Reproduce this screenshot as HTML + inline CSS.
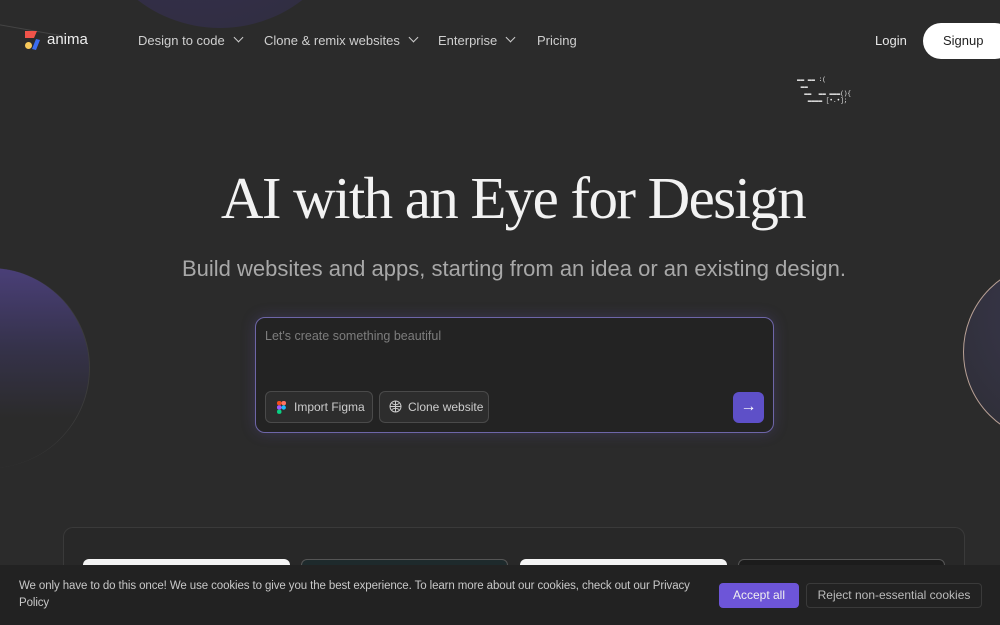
<!DOCTYPE html>
<html><head><meta charset="utf-8"><style>
*{margin:0;padding:0;box-sizing:border-box}
html,body{width:1000px;height:625px;overflow:hidden}
body{background:#2b2b2b;font-family:"Liberation Sans",sans-serif;color:#ddd;position:relative}
.circ{position:absolute;border-radius:50%}
.nav{position:absolute;top:0;left:0;right:0;height:82px}
.nav a{position:absolute;top:33px;font-size:13px;color:#cfcfcf;text-decoration:none}
.chev{display:inline-block;width:7px;height:7px;border-right:1.4px solid #ccc;border-bottom:1.4px solid #ccc;transform:rotate(45deg);margin-left:10px;position:relative;top:-4px}
h1{position:absolute;top:164px;left:26px;right:0;text-align:center;font-family:"Liberation Serif",serif;font-weight:400;font-size:59px;color:#f2f2f2;letter-spacing:-1.6px}
.sub{position:absolute;top:256px;left:28px;right:0;text-align:center;font-size:22px;color:#a8a8a8}
.box{position:absolute;left:255px;top:317px;width:519px;height:116px;border:1px solid #6e66a8;border-radius:10px;background:#232323;box-shadow:0 0 14px rgba(110,90,200,.25)}
.btn{position:absolute;top:73px;height:32px;border:1px solid #4a4a4a;border-radius:6px;background:#2d2d2d;font-size:12px;color:#ccc;line-height:30px}
.cookie{position:absolute;left:0;right:0;top:565px;height:60px;background:#222}
</style></head><body>
<div class="circ" style="left:90px;top:-220px;width:260px;height:248px;background:radial-gradient(circle at 40% 30%,#3a3358,#2e2c3c);"></div>
<div style="position:absolute;left:0;top:0;width:80px;height:25px;border-bottom:1px solid #555;transform:rotate(10deg);transform-origin:0 0;opacity:.6"></div>
<div class="circ" style="left:-110px;top:268px;width:200px;height:200px;background:linear-gradient(180deg,#4a3f78 0%,#35324a 40%,#2b2b2b 75%);border-right:1px solid #3c3c3c"></div>
<div class="circ" style="left:963px;top:262px;width:180px;height:180px;border:1px solid #b8a095;background:radial-gradient(circle at 60% 30%,#3a3850,#2d2d33)"></div>
<div class="nav">
 <svg style="position:absolute;left:25px;top:31px" width="18" height="20" viewBox="0 0 18 20"><path d="M0 0H12L9 7H0Z" fill="#f0534a"/><circle cx="3.5" cy="14.5" r="3.5" fill="#f7c85a"/><path d="M11 8L15 9L11 19L7 18Z" fill="#3b6cf0"/></svg>
 <span style="position:absolute;left:47px;top:31px;font-size:15px;color:#eee">anima</span>
 <a style="left:138px">Design to code<span class="chev"></span></a>
 <a style="left:264px">Clone &amp; remix websites<span class="chev"></span></a>
 <a style="left:438px">Enterprise<span class="chev"></span></a>
 <a style="left:537px">Pricing</a>
 <a style="left:875px;color:#e8e8e8">Login</a>
 <div style="position:absolute;left:923px;top:23px;width:90px;height:36px;border-radius:18px;background:#fff;color:#222;font-size:13px;line-height:36px;padding-left:20px">Signup</div>
</div>
<div style="position:absolute;left:797px;top:76px;font:6px 'Liberation Mono',monospace;color:#eee;line-height:7px;white-space:pre">▬▬ ▬▬ :(
 ▬▬
  ▬▬  ▬▬ ▬▬▬(){
   ▬▬▬▬ [•.•];</div>
<h1>AI with an Eye for Design</h1>
<div class="sub">Build websites and apps, starting from an idea or an existing design.</div>
<div class="box">
 <div style="position:absolute;left:9px;top:11px;font-size:12.5px;color:#7d7d7d">Let's create something beautiful</div>
 <div class="btn" style="left:9px;width:108px;padding-left:28px">Import Figma
  <svg style="position:absolute;left:11px;top:9px" width="9" height="13" viewBox="0 0 9 13"><rect width="4.5" height="4.3" fill="#f24e1e" rx="2"/><rect x="4.5" width="4.5" height="4.3" fill="#ff7262" rx="2"/><rect y="4.3" width="4.5" height="4.3" fill="#a259ff" rx="2"/><circle cx="6.7" cy="6.5" r="2.2" fill="#1abcfe"/><rect y="8.6" width="4.5" height="4.3" fill="#0acf83" rx="2"/></svg></div>
 <div class="btn" style="left:123px;width:110px;padding-left:28px">Clone website
  <svg style="position:absolute;left:9px;top:8px" width="13" height="13" viewBox="0 0 13 13" fill="none" stroke="#ccc" stroke-width="1"><circle cx="6.5" cy="6.5" r="5.5"/><path d="M1 6.5H12M6.5 1V12M3 3.5Q6.5 6 10 3.5M3 9.5Q6.5 7 10 9.5"/></svg></div>
 <div style="position:absolute;left:477px;top:74px;width:31px;height:31px;border-radius:6px;background:#5e50c8;color:#fff;font-size:16px;text-align:center;line-height:30px">→</div>
</div>
<div style="position:absolute;left:63px;top:527px;width:902px;height:98px;border:1px solid #3a3a3a;border-bottom:none;border-radius:10px 10px 0 0;background:#282828"></div>
<div style="position:absolute;left:83px;top:559px;width:207px;height:20px;background:#f4f4f4;border-radius:6px"></div>
<div style="position:absolute;left:301px;top:559px;width:207px;height:20px;background:#1e2a2c;border:1px solid #555;border-radius:6px"></div>
<div style="position:absolute;left:520px;top:559px;width:207px;height:20px;background:#f4f4f4;border-radius:6px"></div>
<div style="position:absolute;left:738px;top:559px;width:207px;height:20px;background:#1c1c1c;border:1px solid #555;border-radius:6px"></div>
<div class="cookie">
 <div style="position:absolute;left:19px;top:13px;width:690px;font-size:11.5px;line-height:17px;color:#c8c8c8;letter-spacing:-0.1px">We only have to do this once! We use cookies to give you the best experience. To learn more about our cookies, check out our Privacy Policy</div>
 <div style="position:absolute;left:719px;top:18px;width:80px;height:25px;border-radius:4px;background:#6d55d8;color:#f0f0f0;font-size:12px;text-align:center;line-height:25px">Accept all</div>
 <div style="position:absolute;left:806px;top:18px;width:176px;height:25px;border-radius:4px;border:1px solid #3a3a3a;color:#bbb;font-size:12px;text-align:center;line-height:23px">Reject non-essential cookies</div>
</div>
</body></html>
